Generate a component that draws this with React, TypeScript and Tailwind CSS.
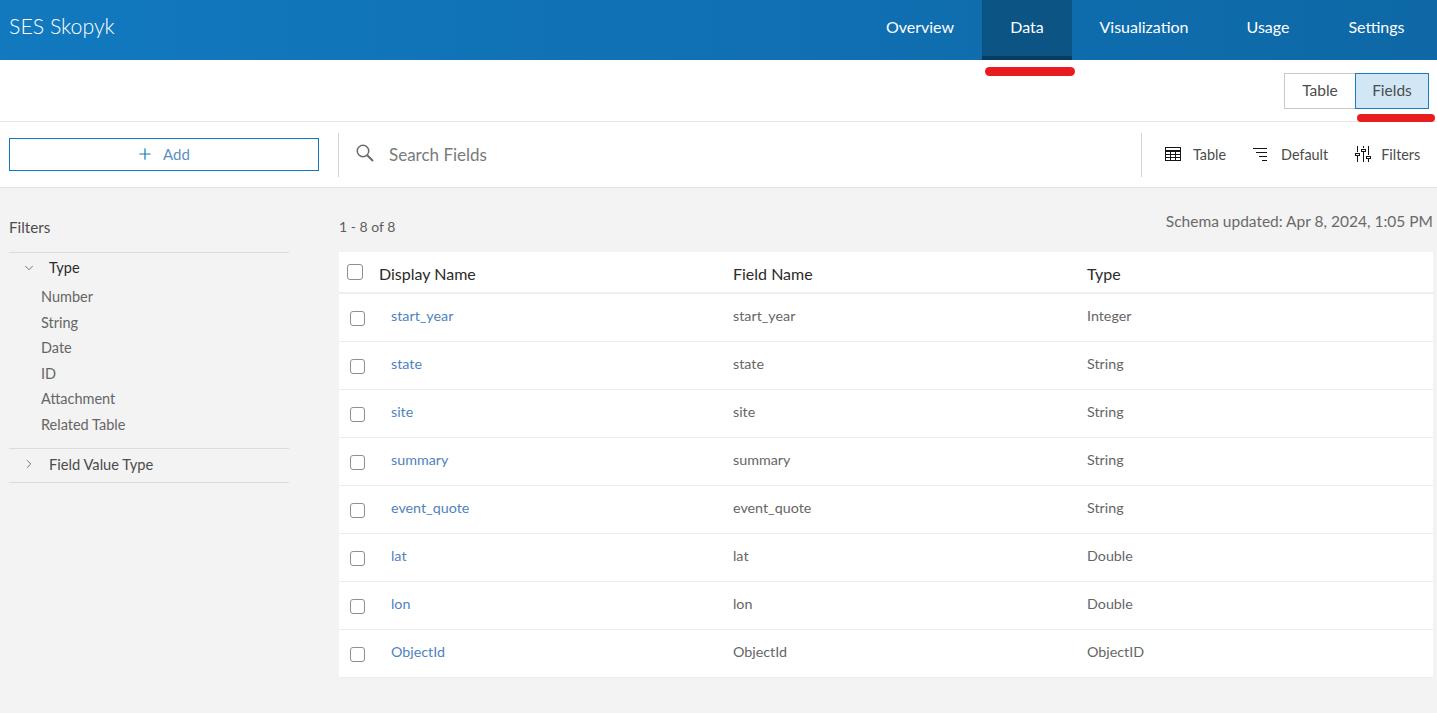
import React from 'react';
import { Plus, ChevronDown, ChevronRight } from 'lucide-react';

const navItems = [
  { label: 'Overview', width: 'w-[124px]' },
  { label: 'Data', width: 'w-[90px]', active: true },
  { label: 'Visualization', width: 'w-[144px]' },
  { label: 'Usage', width: 'w-[104px]' },
  { label: 'Settings', width: 'w-[113px]' },
];

const typeFilters = ['Number', 'String', 'Date', 'ID', 'Attachment', 'Related Table'];

const fields = [
  { name: 'start_year', type: 'Integer' },
  { name: 'state', type: 'String' },
  { name: 'site', type: 'String' },
  { name: 'summary', type: 'String' },
  { name: 'event_quote', type: 'String' },
  { name: 'lat', type: 'Double' },
  { name: 'lon', type: 'Double' },
  { name: 'ObjectId', type: 'ObjectID' },
];

const SearchIcon = () => (
  <svg width="18" height="18" viewBox="0 0 18 18" fill="none" stroke="#6a6a6a" strokeWidth="1.5">
    <circle cx="7" cy="7" r="5.75" />
    <path d="M11.2 11.2 17 17" strokeWidth="2" />
  </svg>
);

const TableIcon = () => (
  <svg width="16" height="16" viewBox="0 0 16 16" fill="none" stroke="#151515" strokeWidth="1" shapeRendering="crispEdges">
    <rect x="0.5" y="1.5" width="15" height="13" />
    <path d="M0 4.5h16" strokeWidth="2" />
    <path d="M0 8.5h16M0 11.5h16M5.5 4v11M10.5 4v11" />
  </svg>
);

const SortIcon = () => (
  <svg width="16" height="16" viewBox="0 0 16 16" fill="none" stroke="#151515" strokeWidth="1" shapeRendering="crispEdges">
    <path d="M1 2.5h14M4 6.5h11M7 10.5h8M10 14.5h5" />
  </svg>
);

const SlidersIcon = () => (
  <svg width="16" height="16" viewBox="0 0 16 16" fill="none" stroke="#151515" strokeWidth="1" shapeRendering="crispEdges">
    <path d="M2.5 0v6M2.5 10v6M8.5 0v2M8.5 6v10M13.5 0v9M13.5 13v3" />
    <rect x="0.5" y="7.5" width="4" height="2" />
    <rect x="6.5" y="3.5" width="4" height="2" />
    <rect x="11.5" y="10.5" width="4" height="2" />
  </svg>
);

const Checkbox = ({ className }: { className: string }) => (
  <span className={`block rounded-[3px] border border-[#8f8f8f] bg-white ${className}`} />
);

export default function App() {
  return (
    <div className="relative flex h-[713px] w-[1437px] flex-col overflow-hidden bg-[#f3f3f3] font-['Lato','Open_Sans',sans-serif] text-[#4c4c4c]">
      <header className="flex h-[60px] items-stretch justify-between bg-gradient-to-r from-[#1279bf] to-[#0e68a6] pr-[4px] text-white">
        <div className="pl-[9px] pt-[13px] text-[21.3px] font-light leading-[27px]">SES Skopyk</div>
        <nav className="flex">
          {navItems.map((item) => (
            <div
              key={item.label}
              className={`flex items-center justify-center text-[16px] ${item.width} ${
                item.active ? 'border-b-[4px] border-[#063c60] bg-[#0b5484] pb-[2px]' : 'pb-[6px]'
              }`}
            >
              {item.label}
            </div>
          ))}
        </nav>
      </header>

      <div className="flex h-[62px] justify-end border-b border-[#e6e6e6] bg-white pr-[8px] pt-[13px]">
        <div className="flex h-[36px] text-[15.5px]">
          <div className="flex w-[71px] items-center justify-center border border-r-0 border-[#c8c8c8] pb-[1px]">Table</div>
          <div className="flex w-[74px] items-center justify-center border border-[#1a7dc0] bg-[#d2e7f6] pb-[1px]">Fields</div>
        </div>
      </div>

      <div className="flex h-[66px] items-center border-b border-[#e2e2e2] bg-white">
        <div className="w-[338px] pl-[9px]">
          <button className="flex h-[33px] w-[310px] items-center justify-center gap-[9px] border border-[#1279bf] pb-[1px] pr-[2px] text-[15px] text-[#5b8ec4]">
            <Plus size={18} strokeWidth={1.6} className="text-[#1279bf]" />
            Add
          </button>
        </div>
        <div className="flex h-[44px] w-[804px] items-center border-x border-[#d4d4d4] pl-[17px] text-[17px] text-[#7a7a7a]">
          <span className="-mt-[3px]"><SearchIcon /></span>
          <span className="ml-[15px]">Search Fields</span>
        </div>
        <div className="flex flex-1 items-center text-[14.4px]">
          <div className="ml-[23px] flex items-center gap-[12px]"><TableIcon />Table</div>
          <div className="ml-[26px] flex items-center gap-[13px]"><SortIcon />Default</div>
          <div className="ml-[27px] flex items-center gap-[10px]"><SlidersIcon />Filters</div>
        </div>
      </div>

      <div className="flex flex-1">
        <aside className="w-[339px] pl-[9px] pt-[29px]">
          <div className="w-[280px]">
            <div className="h-[35px] text-[15.2px] leading-[20px]">Filters</div>
            <div className="border-y border-[#dcdcdc] pb-[11px] pt-[4px]">
              <div className="flex h-[22px] items-center text-[14.5px] text-[#2b2b2b]">
                <ChevronDown size={14} strokeWidth={1.2} className="ml-[13px] text-[#444444]" />
                <span className="ml-[13px]">Type</span>
              </div>
              <ul className="mt-[5px] pl-[32px] text-[14.5px]">
                {typeFilters.map((t) => (
                  <li key={t} className="h-[25.5px] leading-[25px] text-[#666666]">{t}</li>
                ))}
              </ul>
            </div>
            <div className="flex h-[34px] items-center border-b border-[#dcdcdc] pb-[3px] text-[14.7px]">
              <ChevronRight size={14} strokeWidth={1.2} className="ml-[13px] text-[#444444]" />
              <span className="ml-[13px]">Field Value Type</span>
            </div>
          </div>
        </aside>

        <main className="w-[1094px] pt-[22px]">
          <div className="flex h-[42px] items-start justify-between">
            <span className="pt-[6px] text-[14px] text-[#5e5e5e]">1 - 8 of 8</span>
            <span className="whitespace-nowrap text-[15.5px] text-[#6a6a6a]">Schema updated: Apr 8, 2024, 1:05 PM</span>
          </div>
          <div className="bg-white">
            <div className="flex h-[42px] items-center border-b-2 border-[#eeeeee] text-[16px] text-[#2b2b2b]">
              <div className="flex w-[394px] items-center">
                <Checkbox className="ml-[8px] mr-[16px] h-[16px] w-[16px]" />
                <span className="mt-[3px]">Display Name</span>
              </div>
              <div className="mt-[3px] w-[354px]">Field Name</div>
              <div className="mt-[3px]">Type</div>
            </div>
            {fields.map((f) => (
              <div key={f.name} className="flex h-[48px] items-center border-b border-[#ececec] text-[14.3px]">
                <div className="flex w-[394px] items-center">
                  <Checkbox className="ml-[11px] mr-[26px] mt-[2px] h-[15px] w-[15px]" />
                  <span className="-mt-[4px] text-[#4f83bd]">{f.name}</span>
                </div>
                <div className="-mt-[4px] w-[354px] text-[#666666]">{f.name}</div>
                <div className="-mt-[4px] text-[#666666]">{f.type}</div>
              </div>
            ))}
          </div>
        </main>
      </div>

      {/* red annotation strokes drawn on top of the screenshot */}
      <div className="absolute left-[985px] top-[67px] h-[9px] w-[90px] rounded-full bg-[#e81c1f]" />
      <div className="absolute left-[1357px] top-[114px] h-[8px] w-[78px] rounded-full bg-[#e81c1f]" />
    </div>
  );
}
